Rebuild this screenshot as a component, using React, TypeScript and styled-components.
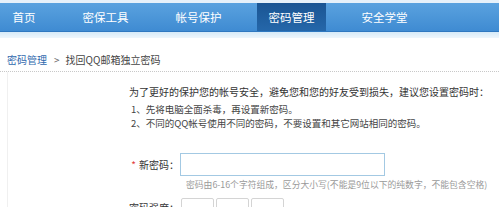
import React from "react";
import styled, {createGlobalStyle} from "styled-components";

const GlobalStyle = createGlobalStyle`
    html, body {
        margin: 0;
        padding: 0;
        background: #ffffff;
        overflow: hidden;
    }
    body {
        font-family: "Noto Sans CJK SC", "Liberation Sans", sans-serif;
        color: #333333;
    }
`

const Page = styled.div`
    width: 499px;
    height: 207px;
    overflow: hidden;
`

const TopStrip = styled.div`
    height: 3px;
    background: #e6f1fa;
`

const NavBar = styled.div`
    display: flex;
    gap: 24px;
    height: 28px;
    padding-left: 1px;
    background: linear-gradient(#5aa2df, #3f8bd2);
    border-bottom: 1px solid #2f78c0;
`

interface NavItemProps {
    active?: boolean
}

const NavItem = styled.div<NavItemProps>`
    display: flex;
    align-items: center;
    padding: 0 11.5px;
    font-size: 11.5px;
    line-height: 28px;
    color: #ffffff;
    white-space: nowrap;
    background: ${props => props.active ? "linear-gradient(#1a5593, #2567aa)" : "transparent"};
`

const NavShadow = styled.div`
    height: 6px;
    background: linear-gradient(#d6eaf8, #eef6fc);
`

const Breadcrumb = styled.div`
    display: flex;
    align-items: center;
    padding: 15px 0 4px 7px;
    font-size: 10px;
    line-height: 14px;
    color: #444444;
    border-bottom: 1px dotted #c8c8c8;
`

const CrumbLink = styled.span`
    color: #2f68ad;
`

const CrumbSep = styled.span`
    margin: 0 6px 0 7px;
    color: #666666;
`

const Content = styled.div`
    margin-left: 7px;
    padding: 13px 0 0 121px;
    border-left: 1px solid #f0f0f0;
    height: 200px;
`

const Intro = styled.div`
    font-size: 10px;
    line-height: 14px;
    color: #333333;
    white-space: nowrap;
`

const Tips = styled.div`
    margin-top: 3px;
    padding-left: 2px;
    font-size: 9.5px;
    line-height: 14px;
    color: #444444;
    white-space: nowrap;
`

const FormRow = styled.div<{top: number}>`
    display: flex;
    align-items: flex-start;
    margin-top: ${props => props.top}px;
`

const Label = styled.div<{pad: number}>`
    width: 50px;
    padding-top: ${props => props.pad}px;
    text-align: right;
    font-size: 10px;
    line-height: 14px;
    color: #333333;
    white-space: nowrap;
`

const Star = styled.span`
    color: #e23b3b;
    margin-right: 3px;
`

const Input = styled.div`
    margin-left: 1px;
    width: 203px;
    height: 21px;
    border: 1px solid #a3c9e3;
    background: #ffffff;
`

const Hint = styled.div`
    margin: 2px 0 0 57px;
    font-size: 8.8px;
    line-height: 14px;
    color: #9a9a9a;
    white-space: nowrap;
`

const Strength = styled.div`
    display: flex;
    gap: 2px;
    margin-left: 2px;
`

const StrengthBox = styled.div`
    width: 31px;
    height: 18px;
    border: 1px solid #d4d4d4;
    border-radius: 2px;
    background: #ffffff;
`

export default function App() {
    const tabs = ["首页", "密保工具", "帐号保护", "密码管理", "安全学堂"]
    return <Page>
        <GlobalStyle/>
        <TopStrip/>
        <NavBar>
            {tabs.map(t => <NavItem key={t} active={t === "密码管理"}>{t}</NavItem>)}
        </NavBar>
        <NavShadow/>
        <Breadcrumb>
            <CrumbLink>密码管理</CrumbLink>
            <CrumbSep>&gt;</CrumbSep>
            <span>找回QQ邮箱独立密码</span>
        </Breadcrumb>
        <Content>
            <Intro>为了更好的保护您的帐号安全，避免您和您的好友受到损失，建议您设置密码时：</Intro>
            <Tips>
                <div>1、先将电脑全面杀毒，再设置新密码。</div>
                <div>2、不同的QQ帐号使用不同的密码，不要设置和其它网站相同的密码。</div>
            </Tips>
            <FormRow top={23}>
                <Label pad={5}><Star>*</Star>新密码：</Label>
                <Input/>
            </FormRow>
            <Hint>密码由6-16个字符组成，区分大小写(不能是9位以下的纯数字，不能包含空格)</Hint>
            <FormRow top={6}>
                <Label pad={3}>密码强度：</Label>
                <Strength>
                    <StrengthBox/>
                    <StrengthBox/>
                    <StrengthBox/>
                </Strength>
            </FormRow>
        </Content>
    </Page>
}
